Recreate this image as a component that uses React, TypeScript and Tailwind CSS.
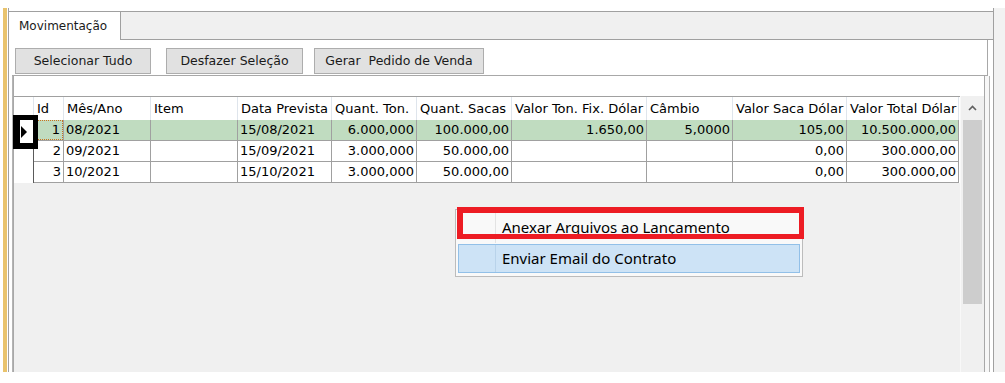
import React from 'react';

type Col = { label: string; w: string; right?: boolean };

const cols: Col[] = [
  { label: 'Id', w: 'w-[30px]', right: true },
  { label: 'Mês/Ano', w: 'w-[87px]' },
  { label: 'Item', w: 'w-[87px]' },
  { label: 'Data Prevista', w: 'w-[94px]' },
  { label: 'Quant. Ton.', w: 'w-[85px]', right: true },
  { label: 'Quant. Sacas', w: 'w-[95px]', right: true },
  { label: 'Valor Ton. Fix. Dólar', w: 'w-[135px]', right: true },
  { label: 'Câmbio', w: 'w-[86px]', right: true },
  { label: 'Valor Saca Dólar', w: 'w-[114px]', right: true },
  { label: 'Valor Total Dólar', w: 'w-[112px]', right: true },
];

const rows = [
  ['1', '08/2021', '', '15/08/2021', '6.000,000', '100.000,00', '1.650,00', '5,0000', '105,00', '10.500.000,00'],
  ['2', '09/2021', '', '15/09/2021', '3.000,000', '50.000,00', '', '', '0,00', '300.000,00'],
  ['3', '10/2021', '', '15/10/2021', '3.000,000', '50.000,00', '', '', '0,00', '300.000,00'],
];

function Btn({ label, w, ml }: { label: string; w: string; ml: string }) {
  return (
    <div
      className={`${w} ${ml} h-[26px] bg-[#e1e1e1] border border-[#adadad] flex items-center justify-center text-[12.5px] text-[#1a1a1a] whitespace-pre`}
    >
      {label}
    </div>
  );
}

export default function App() {
  return (
    <div className="relative w-[1005px] h-[383px] bg-white overflow-hidden text-black font-['DejaVu_Sans',sans-serif]">
      <div className="h-[8px]" />
      <div className="flex h-[364px]">
        <div className="w-[3px]" />
        <div className="w-[4px] bg-[#e9c36d]" />
        <div className="w-[1px]" />

        {/* main frame */}
        <div className="w-[986px] flex flex-col border-l border-r border-[#a0a0a0]">
          {/* tab strip */}
          <div className="flex h-[32px]">
            <div className="w-[112px] mt-[3px] bg-white border-t border-r border-[#a0a0a0] flex items-center pl-[10px] text-[12px] text-[#1a1a1a]">
              Movimentação
            </div>
            <div className="flex-1 mt-[3px] bg-[#f0f0f0] border-t border-b border-[#a0a0a0]" />
          </div>

          <div className="flex-1 flex flex-col pl-[3px] pr-[3px] bg-white">
            {/* buttons panel */}
            <div className="h-[36px] w-[976px] border-b border-r border-[#a8a8a8] flex items-start pt-[8px] pl-[3px]">
              <Btn label="Selecionar Tudo" w="w-[136px]" ml="ml-0" />
              <Btn label="Desfazer Seleção" w="w-[137px]" ml="ml-[15px]" />
              <Btn label="Gerar  Pedido de Venda" w="w-[170px]" ml="ml-[11px]" />
            </div>

            {/* grid panel */}
            <div className="flex-1 flex border-l border-r border-[#b4b4b4]">
              <div className="w-[947px] flex flex-col border-l border-[#a8a8a8]">
                <div className="h-[20px] bg-white" />
                <div className="h-[24px] flex border-t border-[#a0a0a0] bg-white">
                  <div className="w-[20px] border-r border-[#dfe5ec]" />
                  {cols.map((c) => (
                    <div
                      key={c.label}
                      className={`${c.w} border-r border-[#dfe5ec] flex items-center pl-[3px] text-[13px] whitespace-nowrap overflow-hidden`}
                    >
                      {c.label}
                    </div>
                  ))}
                </div>
                {rows.map((r, ri) => (
                  <div key={ri} className="h-[21px] flex">
                    <div className="w-[20px] bg-white border-r border-[#5a5a5a]" />
                    {cols.map((c, ci) => {
                      const sel = ri === 0;
                      const focus = sel && ci === 0;
                      return (
                        <div
                          key={c.label}
                          className={`${c.w} ${sel ? 'bg-[#c0dcc0]' : 'bg-white'} border-r border-b border-[#a0a0a0] text-[13px] whitespace-nowrap overflow-hidden`}
                        >
                          <div
                            className={`h-full flex items-center ${c.right ? 'justify-end pr-[2px]' : 'pl-[2px]'} ${focus ? 'border border-dotted border-[#c8731f]' : ''}`}
                          >
                            {r[ci]}
                          </div>
                        </div>
                      );
                    })}
                  </div>
                ))}
                <div className="flex-1 bg-[#f0f0f0]" />
              </div>

              {/* scrollbar */}
              <div className="w-[25px] flex flex-col border-r border-[#a8a8a8]">
                <div className="h-[20px] bg-white" />
                <div className="flex-1 flex flex-col bg-[#f0f0f0] border-l border-[#f8f8f8]">
                  <div className="h-[24px] flex items-center justify-center">
                    <svg width="9" height="6" viewBox="0 0 9 6">
                      <polyline points="1,5 4.5,1.5 8,5" fill="none" stroke="#606060" strokeWidth="1.6" />
                    </svg>
                  </div>
                  <div className="h-[184px] mx-[2px] bg-[#cdcdcd]" />
                </div>
              </div>
              <div className="w-[4px] bg-[#f7f7f7]" />
            </div>
          </div>
        </div>

        <div className="w-[11px] bg-[#f2f2f2]" />
      </div>

      {/* row indicator highlight */}
      <div className="absolute left-[13px] top-[115px] w-[25px] h-[34px] bg-white border-black border-t-[5px] border-r-[5px] border-b-[6px] border-l-[7px] flex items-center pl-[1px]">
        <svg width="6" height="12" viewBox="0 0 6 12">
          <polygon points="0,0 6,6 0,12" fill="#000" />
        </svg>
      </div>

      {/* context menu */}
      <div className="absolute left-[455px] top-[209px] w-[348px] h-[68px] bg-[#f9f9f9] border border-[#bcbcbc] pt-[2px] px-[2px] pb-[3px] flex flex-col gap-[1px] font-['Noto_Sans',sans-serif] text-[15px]">
        <div className="h-[31px] flex">
          <div className="w-[38px] border-r border-[#e3e3e3]" />
          <div className="flex items-center pl-[6px]">Anexar Arquivos ao Lançamento</div>
        </div>
        <div className="h-[29px] flex bg-[#cde3f6] border border-[#92c0e8]">
          <div className="w-[37px] border-r border-[#b9d3ea]" />
          <div className="flex items-center pl-[6px]">Enviar Email do Contrato</div>
        </div>
      </div>
      <div className="absolute left-[457px] top-[207px] w-[347px] h-[32px] border-[#ed1c24] border-t-[6px] border-l-[6px] border-r-[5px] border-b-[5px]" />
    </div>
  );
}
